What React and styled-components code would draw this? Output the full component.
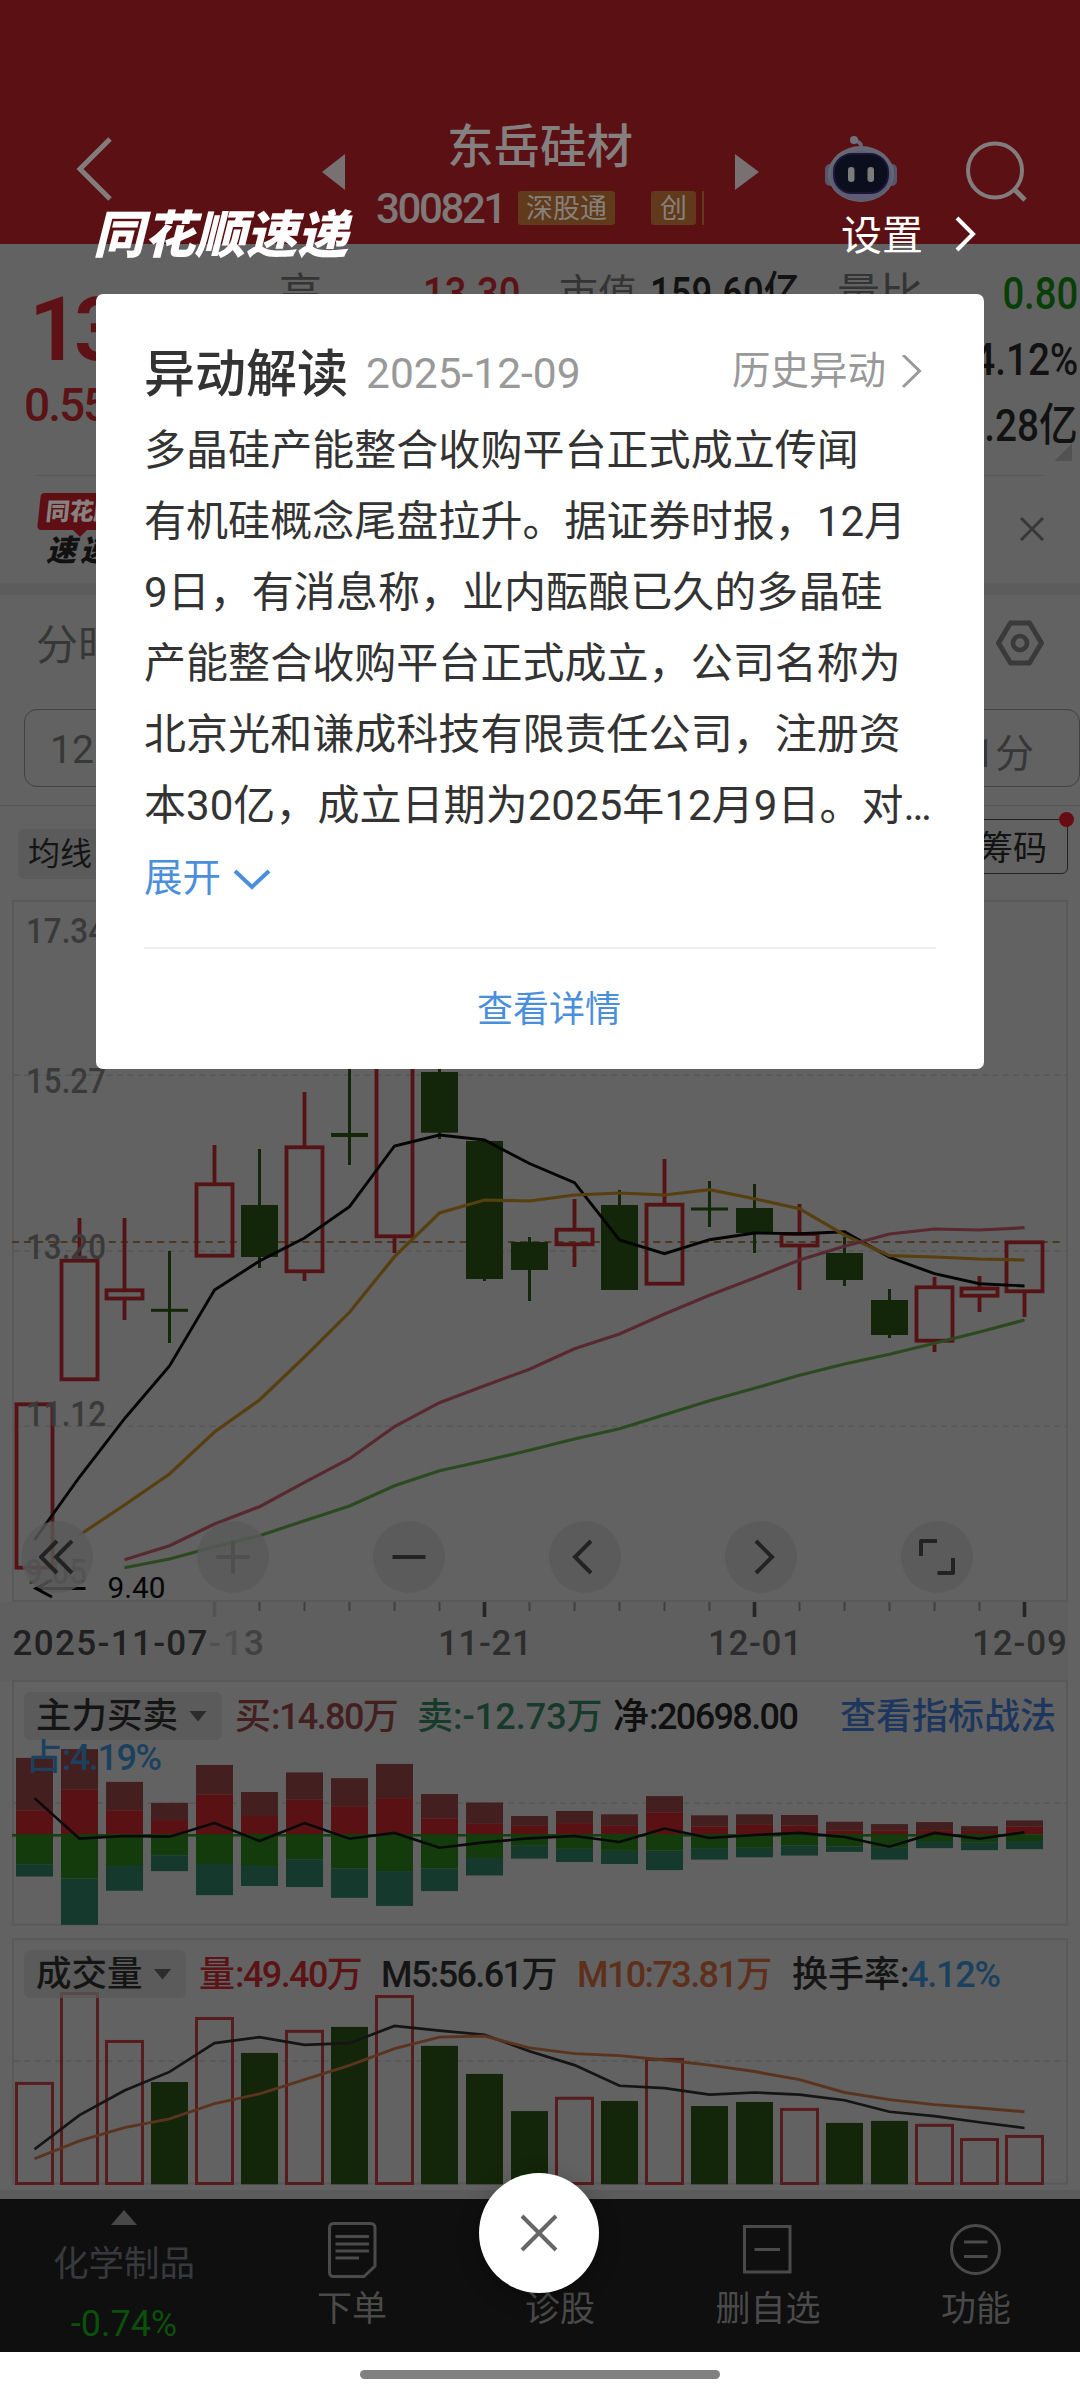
import React from "react";
import styled, { createGlobalStyle } from "styled-components";

const Global = createGlobalStyle`
  html, body { margin: 0; padding: 0; background: #fff; }
  * { box-sizing: border-box; }
`;

const FONT = `Roboto, "Noto Sans CJK SC", sans-serif`;

const Screen = styled.div`
  position: relative;
  width: 1080px;
  height: 2400px;
  overflow: hidden;
  background: #626262;
  font-family: ${FONT};
  color: #131313;
`;
const Page = styled.div`
  display: flex;
  flex-direction: column;
  width: 1080px;
`;

/* ---------- header ---------- */
const Header = styled.header`
  display: flex;
  align-items: flex-start;
  height: 244px;
  padding: 115px 0 0 76px;
  background: #5b1114;
`;
const HeadIcon = styled.svg`
  flex: none;
  display: block;
  margin-top: ${(p) => p.$top}px;
  margin-left: ${(p) => p.$left || 0}px;
  overflow: visible;
`;
const TitleBlock = styled.div`
  width: 390px;
  display: flex;
  flex-direction: column;
`;
const StockName = styled.h1`
  margin: 0;
  padding-top: 2px;
  font-size: 46.5px;
  line-height: 60px;
  font-weight: 500;
  text-align: center;
  color: #848080;
`;
const CodeRow = styled.div`
  display: flex;
  align-items: center;
  height: 34px;
  margin-top: 14px;
  padding-left: 31px;
`;
const Code = styled.span`
  width: 142px;
  padding-top: 2px;
  font-size: 42px;
  line-height: 34px;
  font-weight: 500;
  letter-spacing: -2.4px;
  color: #7e7878;
`;
const Tag = styled.span`
  width: ${(p) => p.$w}px;
  height: 34px;
  margin-right: ${(p) => p.$gap}px;
  border-radius: 3px;
  background: #603a1b;
  color: #86807a;
  font-size: 27px;
  line-height: 36px;
  text-align: center;
`;
const TagEdge = styled.span`
  width: 2px;
  height: 34px;
  background: #603a1b;
`;

/* ---------- quote ---------- */
const Quote = styled.section`
  display: grid;
  grid-template-columns: 279px 1fr;
  height: 231px;
`;
const PriceCol = styled.div`
  display: flex;
  flex-direction: column;
  padding-left: 24px;
`;
const Price = styled.div`
  padding-left: 5px;
  margin-top: 36px;
  height: 100px;
  line-height: 100px;
  font-size: 89px;
  font-weight: 600;
  letter-spacing: -6px;
  color: #5f1215;
`;
const Change = styled.div`
  height: 50px;
  line-height: 50px;
  font-size: 46px;
  font-weight: 500;
  letter-spacing: -2px;
  color: #5b1316;
`;
const Metrics = styled.div`
  display: flex;
  flex-direction: column;
  padding-top: 17px;
`;
const MetricRow = styled.div`
  display: flex;
  height: 66px;
  align-items: center;
  padding-right: 2px;
`;
const MLabel = styled.span`
  width: ${(p) => p.$w}px;
  font-size: ${(p) => p.$size}px;
  line-height: 68px;
  color: #343434;
  white-space: nowrap;
`;
const MValue = styled.span`
  width: ${(p) => p.$w}px;
  margin-left: ${(p) => (p.$right ? "auto" : 0)};
  font-size: 45px;
  line-height: 66px;
  font-weight: 500;
  text-align: ${(p) => (p.$right ? "right" : "left")};
  white-space: nowrap;
  transform: scaleX(${(p) => p.$k || 0.86});
  transform-origin: ${(p) => (p.$right ? "right" : "left")} center;
  color: ${(p) => p.$color || "#121212"};
`;
const Corner = styled.i`
  align-self: flex-end;
  margin: -15px 8px 0 0;
  width: 18px;
  height: 17px;
  background: linear-gradient(135deg, transparent 50%, #525252 50%);
`;

/* ---------- banner ---------- */
const Banner = styled.section`
  display: flex;
  justify-content: space-between;
  height: 108px;
  margin: 0 36px;
  border-top: 1px solid #585858;
`;
const Badge = styled.div`
  padding-top: 17px;
  width: 100px;
`;
const BadgeTop = styled.div`
  height: 37px;
  margin-left: 3px;
  padding-left: 7px;
  border-radius: 4px;
  transform: skewX(-6deg);
  background: #5f0f13;
  color: #868282;
  font-size: 24px;
  line-height: 38px;
  font-weight: 900;
  white-space: nowrap;
`;
const BadgeTip = styled.i`
  display: block;
  width: 14px;
  height: 7px;
  margin-left: 37px;
  background: #5f0f13;
  clip-path: polygon(0 0, 100% 0, 50% 100%);
`;
const BadgeBottom = styled.div`
  padding-left: 10px;
  font-size: 30px;
  line-height: 28px;
  font-weight: 900;
  font-style: italic;
  letter-spacing: 4px;
  color: #111;
  white-space: nowrap;
`;
const Band = styled.div`
  height: 12px;
  background: #5c5c5c;
`;

/* ---------- tabs & periods ---------- */
const TabsRow = styled.nav`
  display: flex;
  justify-content: space-between;
  align-items: center;
  height: 114px;
  padding: 0 36px 18px;
  font-size: 42px;
  line-height: 60px;
  color: #373737;
`;
const TabName = styled.span`
  padding-top: 5px;
`;
const Periods = styled.div`
  display: flex;
  justify-content: space-between;
  align-items: center;
  height: 78px;
  margin: 0 0 0 24px;
  padding: 3px 45px 0 25px;
  border: 1.5px solid #424242;
  border-radius: 13px;
  font-size: 39px;
  color: #373737;
`;
const Rule = styled.div`
  height: 19px;
  border-bottom: 1px solid #565656;
`;
const IndicatorRow = styled.div`
  display: flex;
  justify-content: space-between;
  height: 84px;
  padding: 13px 12px 0 18px;
`;
const Chip = styled.div`
  width: ${(p) => p.$w}px;
  height: ${(p) => p.$h}px;
  margin-top: ${(p) => p.$top || 0}px;
  padding-left: ${(p) => p.$pad}px;
  display: flex;
  align-items: center;
  gap: 11px;
  border-radius: 6px;
  background: rgba(90, 90, 90, 0.75);
  font-size: ${(p) => p.$size}px;
  line-height: ${(p) => p.$h + 2}px;
  font-weight: ${(p) => p.$weight || 400};
  color: #151515;
  white-space: nowrap;
`;
const ChipsButton = styled.div`
  position: relative;
  width: 120px;
  height: 55px;
  padding-right: 20px;
  border: 1.5px solid #222;
  border-radius: 6px;
  text-align: right;
  font-size: 34px;
  line-height: 56px;
`;
const Dot = styled.i`
  position: absolute;
  right: -7px;
  top: -8px;
  width: 15px;
  height: 15px;
  border-radius: 50%;
  background: #680c14;
`;

/* ---------- charts ---------- */
const ChartBox = styled.section`
  display: grid;
  height: ${(p) => p.$h}px;
  > * { grid-area: 1 / 1; }
`;
const Plot = styled.svg`
  display: block;
  font-family: ${FONT};
`;
const Controls = styled.div`
  align-self: end;
  display: flex;
  gap: 104px;
  padding: 0 0 82px 21px;
`;
const RoundButton = styled.div`
  width: 72px;
  height: 72px;
  border-radius: 50%;
  display: flex;
  align-items: center;
  justify-content: center;
  background: rgba(90, 90, 90, 0.8);
  color: ${(p) => (p.$off ? "#4f4f4f" : "#232323")};
`;
const PanelHead = styled.div`
  display: flex;
  align-items: center;
  align-self: start;
  height: 48px;
  margin: ${(p) => p.$top}px 0 0 24px;
`;
const Arrow = styled.i`
  width: 18px;
  height: 11px;
  background: #2c2c2c;
  clip-path: polygon(0 0, 100% 0, 50% 100%);
`;
const Reading = styled.span`
  width: ${(p) => p.$w}px;
  margin-left: ${(p) => p.$gap}px;
  font-size: 36px;
  line-height: 47px;
  padding-top: 2px;
  font-weight: 500;
  color: ${(p) => p.$color};
  white-space: nowrap;
`;
const Digits = styled.span`
  letter-spacing: ${(p) => p.$ls ?? -1.6}px;
`;
const SubReading = styled.div`
  align-self: start;
  margin: 66px 0 0 26px;
  height: 34px;
  font-size: 36px;
  line-height: 34px;
  font-weight: 500;
  color: #1b415f;
`;
const Strip = styled.div`
  height: 9px;
  background: #5b5b5b;
`;

/* ---------- bottom nav ---------- */
const BottomNav = styled.nav`
  display: grid;
  grid-template-columns: 248px repeat(4, 208px);
  height: 153px;
  background: #0f0f0f;
`;
const NavItem = styled.div`
  display: flex;
  flex-direction: column;
  align-items: center;
  padding-top: 18px;
  color: #4a4a4a;
`;
const NavIcon = styled.svg`
  width: 64px;
  height: 64px;
`;
const NavText = styled.span`
  margin-top: 4px;
  font-size: 35px;
  line-height: 50px;
`;
const Up = styled.i`
  width: 26px;
  height: 15px;
  margin-top: -7px;
  background: #484848;
  clip-path: polygon(50% 0, 100% 100%, 0 100%);
`;
const Sector = styled.span`
  margin-top: 14px;
  font-size: 35.5px;
  line-height: 50px;
  color: #37393c;
`;
const SectorPct = styled.span`
  margin-top: 12px;
  font-size: 36px;
  line-height: 46px;
  color: #0b500b;
`;
const Gesture = styled.div`
  height: 48px;
  display: flex;
  justify-content: center;
  padding-top: 18px;
  background: #fff;
`;
const Handle = styled.i`
  width: 360px;
  height: 9px;
  border-radius: 5px;
  background: #808080;
`;

/* ---------- dialog ---------- */
const Overlay = styled.div`
  position: absolute;
  inset: 0;
  display: flex;
  flex-direction: column;
  padding: 204px 96px 0;
`;
const OverlayHead = styled.div`
  display: flex;
  justify-content: space-between;
  align-items: center;
  height: 60px;
  margin-bottom: 30px;
  color: #fff;
`;
const Brand = styled.span`
  margin-left: -3px;
  padding-top: 4px;
  font-size: 51px;
  line-height: 60px;
  font-weight: 900;
  font-style: italic;
`;
const Settings = styled.span`
  display: flex;
  align-items: center;
  gap: 32px;
  padding-right: 7px;
  font-size: 41px;
  line-height: 60px;
`;
const SettingsText = styled.span`
  padding-top: 3px;
`;
const Card = styled.article`
  height: 775px;
  padding: 48px 48px 0;
  border-radius: 7px;
  background: #fff;
  color: #333;
`;
const CardHead = styled.div`
  display: flex;
  align-items: center;
  height: 62px;
  margin-bottom: 11px;
`;
const CardTitle = styled.h2`
  margin: 0;
  padding-top: 3px;
  width: 222px;
  font-size: 51px;
  line-height: 64px;
  font-weight: 500;
  white-space: nowrap;
`;
const CardDate = styled.span`
  font-size: 42.5px;
  color: #999;
`;
const History = styled.span`
  margin-left: auto;
  display: flex;
  align-items: center;
  gap: 16px;
  padding-right: 14px;
  font-size: 38.5px;
  line-height: 50px;
  color: #999;
`;
const HistoryText = styled.span`
  padding-bottom: 4px;
`;
const Line = styled.p`
  margin: 0;
  height: 71px;
  line-height: 71px;
  font-size: 42px;
  letter-spacing: 0.05px;
  white-space: nowrap;
`;
const Expand = styled.div`
  display: flex;
  align-items: center;
  gap: 12px;
  height: 74px;
  font-size: 38.5px;
  line-height: 50px;
  color: #4b8fdc;
`;
const ExpandText = styled.span`
  padding-bottom: 1px;
`;
const Divider = styled.div`
  height: 2px;
  margin-top: 32px;
  background: #eee;
`;
const Detail = styled.div`
  height: 120px;
  line-height: 122px;
  padding-left: 18px;
  text-align: center;
  font-size: 36px;
  color: #4b8fdc;
`;
const Close = styled.div`
  position: absolute;
  left: 479px;
  top: 2173px;
  width: 120px;
  height: 120px;
  border-radius: 50%;
  display: flex;
  align-items: center;
  justify-content: center;
  background: #fff;
  box-shadow: 0 6px 22px rgba(0, 0, 0, 0.28);
`;

/* ---------- data ---------- */
const cx = (i) => 34.5 + 45 * i;
const RED = "#561315";
const GREEN = "#132609";

// [kind, bodyTop, bodyBottom, high, low]
const candles = [
  ["r", 1404.3, 1567.7, 1404, 1567],
  ["r", 1260.7, 1379.3, 1218, 1379],
  ["r", 1290.3, 1298.5, 1218, 1320],
  ["g", 1308.8, 1311.8, 1251, 1343],
  ["r", 1184.3, 1255.7, 1145, 1255],
  ["g", 1205, 1257, 1149, 1268],
  ["r", 1147.3, 1271.3, 1092, 1281],
  ["g", 1133, 1137, 1040, 1165],
  ["r", 1040, 1236.3, 1040, 1253],
  ["g", 1072, 1132.7, 1050, 1139],
  ["g", 1141, 1279, 1141, 1281],
  ["g", 1242, 1270, 1237, 1301],
  ["r", 1229.7, 1244.3, 1199, 1267],
  ["g", 1205, 1290, 1190, 1290],
  ["r", 1204.7, 1283.7, 1159, 1283],
  ["g", 1207.5, 1210.5, 1181, 1227],
  ["g", 1208, 1233, 1184, 1253],
  ["r", 1234, 1245.5, 1204, 1290],
  ["g", 1253, 1280, 1237, 1286],
  ["g", 1300, 1335, 1289, 1338],
  ["r", 1287.3, 1340.7, 1277, 1352],
  ["r", 1288.5, 1295.7, 1276, 1312],
  ["r", 1242.3, 1291.3, 1242, 1317],
];
const ma5 = [1540, 1477, 1418.7, 1366, 1290, 1261, 1238, 1206.7, 1146, 1135, 1140, 1163.5, 1182.7, 1240, 1253.7, 1239.7, 1233, 1233.7, 1231.7, 1257.3, 1273.7, 1283.7, 1286];
const ma10 = [1535, 1505, 1474, 1432, 1400, 1357, 1312.3, 1256.7, 1213, 1200, 1201, 1195, 1193, 1195, 1189.7, 1198.7, 1208.7, 1235, 1255.7, 1257, 1259, 1260];
const ma20 = [1559.7, 1545.7, 1524, 1506.7, 1482.3, 1458.7, 1426.7, 1402.7, 1385.7, 1369.3, 1348.7, 1334, 1314, 1295.3, 1278, 1260, 1246.3, 1234, 1229, 1230, 1227.7];
const ma30 = [1567.7, 1559, 1546.7, 1535.7, 1520.7, 1506, 1485.7, 1470.7, 1460.7, 1450.3, 1439, 1428.7, 1414.7, 1400.7, 1388.3, 1375.3, 1364, 1354.3, 1343.3, 1332, 1320];

// [buy, large buy, large sell, sell] in chart units
const flow = [
  [260, 415, 575, 611], [234, 354, 617, 754], [331, 415, 580, 653], [393, 444, 548, 595],
  [281, 368, 574, 666], [361, 432, 580, 639], [303, 383, 560, 642], [320, 403, 587, 674],
  [278, 379, 595, 698], [367, 440, 587, 654], [392, 455, 556, 608], [432, 461, 520, 558],
  [417, 453, 529, 568], [427, 461, 535, 574], [373, 421, 534, 592], [430, 463, 527, 561],
  [427, 458, 526, 554], [429, 460, 519, 549], [449, 475, 522, 538], [456, 475, 526, 561],
  [450, 474, 506, 527], [462, 476, 511, 533], [445, 463, 506, 530],
];
const flowLine = [379, 499, 491, 493, 453, 506, 453, 499, 482, 526, 510, 498, 491, 509, 469, 497, 488, 482, 494, 523, 482, 499, 480];

const volumes = [
  ["r", 1223], ["r", 957], ["r", 1099], ["g", 1219], ["r", 1031], ["g", 1133], ["r", 1069], ["g", 1056],
  ["r", 966], ["g", 1112], ["g", 1195], ["g", 1305], ["r", 1267], ["g", 1275], ["r", 1152], ["g", 1290],
  ["g", 1278], ["r", 1300], ["g", 1340], ["g", 1334], ["r", 1347], ["r", 1389], ["r", 1380],
];
const vol5 = [1418, 1317, 1244, 1189, 1104, 1086, 1109, 1104, 1053, 1067, 1079, 1128, 1169, 1230, 1237, 1256, 1250, 1256, 1273, 1307, 1320, 1338, 1355];
const vol10 = [1446, 1393, 1354, 1328, 1283, 1254, 1212, 1170, 1120, 1086, 1083, 1118, 1135, 1141, 1154, 1169, 1188, 1212, 1250, 1271, 1286, 1296, 1307];
const UNIT = 2.9585;
const py = (v) => 1670 + v / UNIT;

const line = (ys, start = 0) => ys.map((y, k) => `${cx(k + start)},${y}`).join(" ");

function Curve({ ys, start, color, width = 2.9 }) {
  return <polyline points={line(ys, start)} fill="none" stroke={color} strokeWidth={width} />;
}

function Grid({ ys }) {
  return ys.map((y) => (
    <line key={y} x1="14" x2="1066" y1={y} y2={y} stroke="#575757" strokeWidth="1.4" strokeDasharray="6 4.3" />
  ));
}

function Label({ x, y, w, color = "#3a3a3a", size = 35, weight = 500, fit = "spacingAndGlyphs", children }) {
  return (
    <text x={x} y={y} textLength={w} lengthAdjust={fit} fontSize={size} fontWeight={weight} fill={color}>
      {children}
    </text>
  );
}

function MainChart() {
  return (
    <Plot width="1080" height="785" viewBox="0 890 1080 785">
      <rect x="0" y="1602" width="1068" height="73" fill="#5f5f5f" />
      <rect x="13" y="901" width="1054" height="700" fill="none" stroke="#595959" strokeWidth="2" />
      <Grid ys={[1075.3, 1251, 1426.3]} />
      <line x1="12" x2="1062" y1="1242" y2="1242" stroke="#4a3724" strokeWidth="2" strokeDasharray="7 5.1" />
      {candles.map(([k, t, b, h, l], i) =>
        k === "r" ? (
          <g key={i} stroke={RED} strokeWidth="3.8" fill="none">
            <rect x={cx(i) - 18} y={t} width="36" height={b - t} />
            {h < t - 1 && <line x1={cx(i)} x2={cx(i)} y1={h} y2={t} />}
            {l > b + 1 && <line x1={cx(i)} x2={cx(i)} y1={b} y2={l} />}
          </g>
        ) : (
          <g key={i} fill={GREEN}>
            <rect x={cx(i) - 18.5} y={t} width="37" height={b - t} />
            <rect x={cx(i) - 1.5} y={h} width="3" height={l - h} />
          </g>
        )
      )}
      <Curve ys={ma5} color="#050505" />
      <Curve ys={ma10} start={1} color="#573f0f" width={3.2} />
      <Curve ys={ma20} start={2} color="#592931" width={3.2} />
      <Curve ys={ma30} start={2} color="#2c4a20" width={3.2} />
      <Label x="26" y="943" w="80">17.34</Label>
      <Label x="26" y="1093" w="80">15.27</Label>
      <Label x="26" y="1259" w="80">13.20</Label>
      <Label x="26" y="1426" w="80">11.12</Label>
      <Label x="25" y="1584" w="62">9.05</Label>
      <path d="M52 1580L36 1588.5L52 1597M36 1588.5H85.5" fill="none" stroke="#050505" strokeWidth="3" />
      <Label x="107.5" y="1598" w="58" size={30} weight={400} color="#050505">9.40</Label>
      {candles.map((_, i) => {
        if (i < 4) return null;
        const major = i % 6 === 4;
        return (
          <rect
            key={i}
            x={cx(i) - (major ? 1.8 : 1)}
            y="1602"
            width={major ? 3.6 : 2}
            height={major ? 15 : 9}
            fill={i === 4 ? "#535353" : major ? "#262626" : "#404040"}
          />
        );
      })}
      <Label x="12.5" y="1655" w="195" fit="spacing" color="#202020">2025-11-07</Label>
      <Label x="209" y="1655" w="34" fit="spacing" color="#505050">-1</Label>
      <Label x="244" y="1655" w="20" color="#414141">3</Label>
      <Label x="438" y="1655" w="94" fit="spacing" color="#2d2d2d">11-21</Label>
      <Label x="708" y="1655" w="94" fit="spacing" color="#2d2d2d">12-01</Label>
      <Label x="972" y="1655" w="95" fit="spacing" color="#2d2d2d">12-09</Label>
    </Plot>
  );
}

function FlowChart() {
  return (
    <Plot width="1080" height="257" viewBox="0 1675 1080 257">
      <rect x="0" y="1675" width="1068" height="6" fill="#5f5f5f" />
      <rect x="13" y="1681" width="1054" height="243.5" fill="none" stroke="#595959" strokeWidth="2" />
      <Grid ys={[1803.2]} />
      <rect x="12" y="1834" width="1014" height="2.6" fill="#1a3f12" />
      {flow.map(([a, b, c, d], i) => (
        <g key={i}>
          <rect x={cx(i) - 18.5} y={py(a)} width="37" height={(b - a) / UNIT} fill="#431f20" />
          <rect x={cx(i) - 18.5} y={py(b)} width="37" height={(486 - b) / UNIT} fill="#5a1113" />
          <rect x={cx(i) - 18.5} y={py(486)} width="37" height={(c - 486) / UNIT} fill="#143b0b" />
          <rect x={cx(i) - 18.5} y={py(c)} width="37" height={(d - c) / UNIT} fill="#16392d" />
        </g>
      ))}
      <Curve ys={flowLine.map(py)} color="#0a0a0a" width={2.6} />
    </Plot>
  );
}

function VolumeChart() {
  return (
    <Plot width="1080" height="258" viewBox="0 1932 1080 258">
      <rect x="13" y="1939" width="1054" height="244.5" fill="none" stroke="#595959" strokeWidth="2" />
      <Grid ys={[2061]} />
      {volumes.map(([k, t], i) =>
        k === "r" ? (
          <rect key={i} x={cx(i) - 18} y={py(t)} width="36" height={2183.5 - py(t)} fill="none" stroke="#571c1d" strokeWidth="3" />
        ) : (
          <rect key={i} x={cx(i) - 18.5} y={py(t)} width="37" height={2184.3 - py(t)} fill={GREEN} />
        )
      )}
      <Curve ys={vol5.map(py)} color="#151515" width={2.7} />
      <Curve ys={vol10.map(py)} color="#5b3420" width={2.9} />
    </Plot>
  );
}

function Stroke({ d, w = 36, h = 36, sw = 4, color = "currentColor", join = "miter" }) {
  return (
    <svg width={w} height={h} viewBox={`0 0 ${w} ${h}`} fill="none" stroke={color} strokeWidth={sw} strokeLinejoin={join}>
      <path d={d} />
    </svg>
  );
}

function Robot() {
  return (
    <HeadIcon $top={21} $left={66} width="72" height="66" viewBox="0 0 72 66">
      <path d="M36 12C37 6 33 7 31 4" stroke="#66667a" strokeWidth="4" fill="none" strokeLinecap="round" />
      <circle cx="29" cy="4" r="4" fill="#72727c" />
      <rect x="0" y="28" width="10" height="22" rx="5" fill="#55556e" />
      <rect x="62" y="28" width="10" height="22" rx="5" fill="#55556e" />
      <ellipse cx="36" cy="38" rx="33" ry="28" fill="#686873" />
      <ellipse cx="36" cy="40" rx="31" ry="25" fill="#5c5c74" />
      <rect x="9" y="18" width="54" height="39" rx="18" fill="#0b0e1c" stroke="#1b1638" strokeWidth="2" />
      <rect x="23" y="31" width="6.5" height="15" rx="3" fill="#7c7c7c" />
      <rect x="42.5" y="31" width="6.5" height="15" rx="3" fill="#7c7c7c" />
    </HeadIcon>
  );
}

export default function App() {
  return (
    <Screen>
      <Global />
      <Page>
        <Header>
          <HeadIcon $top={22} width="36" height="64" fill="none" stroke="#827c7c" strokeWidth="5">
            <path d="M34 2L4 32L34 62" />
          </HeadIcon>
          <HeadIcon $top={39} $left={210} width="23" height="36" fill="#777171">
            <path d="M23 0V36L0 18Z" />
          </HeadIcon>
          <TitleBlock>
            <StockName>东岳硅材</StockName>
            <CodeRow>
              <Code>300821</Code>
              <Tag $w={97} $gap={36}>深股通</Tag>
              <Tag $w={45} $gap={6}>创</Tag>
              <TagEdge />
            </CodeRow>
          </TitleBlock>
          <HeadIcon $top={39} width="24" height="36" fill="#777171">
            <path d="M0 0V36L24 18Z" />
          </HeadIcon>
          <Robot />
          <HeadIcon $top={27} $left={69} width="60" height="60" fill="none" stroke="#827c7c" strokeWidth="4">
            <circle cx="29" cy="28.5" r="27" />
            <path d="M48 47L59 58" strokeWidth="5" />
          </HeadIcon>
        </Header>

        <Quote>
          <PriceCol>
            <Price>13</Price>
            <Change>0.55</Change>
          </PriceCol>
          <Metrics>
            <MetricRow>
              <MLabel $w={144} $size={43}>高</MLabel>
              <MValue $w={136} $k={0.85} $color="#5b1316">13.30</MValue>
              <MLabel $w={91} $size={39}>市值</MLabel>
              <MValue $w={187} $k={0.81}>159.60亿</MValue>
              <MLabel $w={100} $size={43}>量比</MLabel>
              <MValue $right $k={0.85} $color="#073f07">0.80</MValue>
            </MetricRow>
            <MetricRow>
              <MValue $right>4.12%</MValue>
            </MetricRow>
            <MetricRow>
              <MValue $right>.28亿</MValue>
            </MetricRow>
            <Corner />
          </Metrics>
        </Quote>

        <Banner>
          <Badge>
            <BadgeTop>同花顺</BadgeTop>
            <BadgeTip />
            <BadgeBottom>速递</BadgeBottom>
          </Badge>
          <HeadIcon $top={41} width="24" height="24" stroke="#383838" strokeWidth="3">
            <path d="M1 1L23 23M23 1L1 23" />
          </HeadIcon>
        </Banner>
        <Band />

        <TabsRow>
          <TabName>分时</TabName>
          <svg width="48" height="46" viewBox="0 0 48 46" fill="none" stroke="#3a3a3a" strokeWidth="5" strokeLinejoin="round">
            <path d="M14.5 3H33.5L45.5 23L33.5 43H14.5L2.5 23Z" />
            <circle cx="24" cy="23" r="7" strokeWidth="4.6" />
          </svg>
        </TabsRow>
        <Periods>
          <span>12</span>
          <span>1分</span>
        </Periods>
        <Rule />
        <IndicatorRow>
          <Chip $w={150} $h={50} $top={10} $pad={10} $size={32}>均线</Chip>
          <ChipsButton>
            筹码
            <Dot />
          </ChipsButton>
        </IndicatorRow>

        <ChartBox $h={785}>
          <MainChart />
          <Controls>
            <RoundButton><Stroke d="M18 2L2 18L18 34M33 2L17 18L33 34" /></RoundButton>
            <RoundButton $off><Stroke d="M1.5 18H34.5M18 1.5V34.5" /></RoundButton>
            <RoundButton><Stroke d="M1.5 18H34.5" /></RoundButton>
            <RoundButton><Stroke d="M24 2L8 18L24 34" /></RoundButton>
            <RoundButton><Stroke d="M13 2L29 18L13 34" /></RoundButton>
            <RoundButton><Stroke d="M2 17V2H18M34 19V34H18.5" join="round" /></RoundButton>
          </Controls>
        </ChartBox>

        <ChartBox $h={257}>
          <FlowChart />
          <PanelHead $top={17}>
            <Chip $w={198} $h={48} $pad={12} $size={35.5} $weight={500}>主力买卖<Arrow /></Chip>
            <Reading $w={162} $gap={13} $color="#431f20">买<Digits>:14.80</Digits>万</Reading>
            <Reading $w={184} $gap={20} $color="#173a2d">卖<Digits $ls={0}>:-12.73</Digits>万</Reading>
            <Reading $w={184} $gap={12} $color="#101010">净<Digits>:20698.00</Digits></Reading>
            <Reading $w={216} $gap={43} $color="#1d365e">查看指标战法</Reading>
          </PanelHead>
          <SubReading>占<Digits $ls={-1.5}>:4.19%</Digits></SubReading>
        </ChartBox>

        <ChartBox $h={258}>
          <VolumeChart />
          <PanelHead $top={18}>
            <Chip $w={162} $h={48} $pad={12} $size={35.5} $weight={500}>成交量<Arrow /></Chip>
            <Reading $w={162} $gap={13} $color="#5b1316">量<Digits>:49.40</Digits>万</Reading>
            <Reading $w={176} $gap={20} $color="#151515"><Digits>M5:56.61</Digits>万</Reading>
            <Reading $w={194} $gap={20} $color="#5e301b"><Digits>M10:73.81</Digits>万</Reading>
            <Reading $w={116} $gap={21} $color="#151515">换手率:</Reading>
            <Reading $w={92} $gap={0} $color="#1b415f"><Digits $ls={-1.2}>4.12%</Digits></Reading>
          </PanelHead>
        </ChartBox>
        <Strip />

        <BottomNav>
          <NavItem>
            <Up />
            <Sector>化学制品</Sector>
            <SectorPct>-0.74%</SectorPct>
          </NavItem>
          <NavItem>
            <NavIcon viewBox="0 0 64 64" fill="none" stroke="currentColor" strokeWidth="3">
              <path d="M13.5 6.5H50.5Q55 6.5 55 11V49L44 59.5H13.5Q9.5 59.5 9.5 55V11Q9.5 6.5 13.5 6.5Z" />
              <path d="M15.5 19.5H49M15.5 27H49M15.5 34H49M15.5 41H39" />
            </NavIcon>
            <NavText>下单</NavText>
          </NavItem>
          <NavItem>
            <NavIcon viewBox="0 0 64 64" />
            <NavText>诊股</NavText>
          </NavItem>
          <NavItem>
            <NavIcon viewBox="0 0 64 64" fill="none" stroke="currentColor" strokeWidth="3">
              <path d="M8.5 9.5H54V55H8.5ZM18.5 32.5H44" />
            </NavIcon>
            <NavText>删自选</NavText>
          </NavItem>
          <NavItem>
            <NavIcon viewBox="0 0 64 64" fill="none" stroke="currentColor" strokeWidth="3">
              <circle cx="31.5" cy="32.5" r="24" />
              <path d="M20 25H43.5M20 39.5H43.5" />
            </NavIcon>
            <NavText>功能</NavText>
          </NavItem>
        </BottomNav>
        <Gesture>
          <Handle />
        </Gesture>
      </Page>

      <Overlay>
        <OverlayHead>
          <Brand>同花顺速递</Brand>
          <Settings>
            <SettingsText>设置</SettingsText>
            <Stroke w={22} h={36} d="M2 2L18 18L2 34" />
          </Settings>
        </OverlayHead>
        <Card>
          <CardHead>
            <CardTitle>异动解读</CardTitle>
            <CardDate>2025-12-09</CardDate>
            <History>
              <HistoryText>历史异动</HistoryText>
              <Stroke w={20} h={36} sw={3} d="M1 0L17.5 16L1 32" />
            </History>
          </CardHead>
          <Line>多晶硅产能整合收购平台正式成立传闻</Line>
          <Line>有机硅概念尾盘拉升。据证券时报，12月</Line>
          <Line>9日，有消息称，业内酝酿已久的多晶硅</Line>
          <Line>产能整合收购平台正式成立，公司名称为</Line>
          <Line>北京光和谦成科技有限责任公司，注册资</Line>
          <Line>本30亿，成立日期为2025年12月9日。对…</Line>
          <Expand>
            <ExpandText>展开</ExpandText>
            <Stroke w={38} h={24} d="M2 5L19 21L36 5" />
          </Expand>
          <Divider />
          <Detail>查看详情</Detail>
        </Card>
        <Close>
          <Stroke w={38} h={38} d="M2 2L36 36M36 2L2 36" color="#666" />
        </Close>
      </Overlay>
    </Screen>
  );
}
